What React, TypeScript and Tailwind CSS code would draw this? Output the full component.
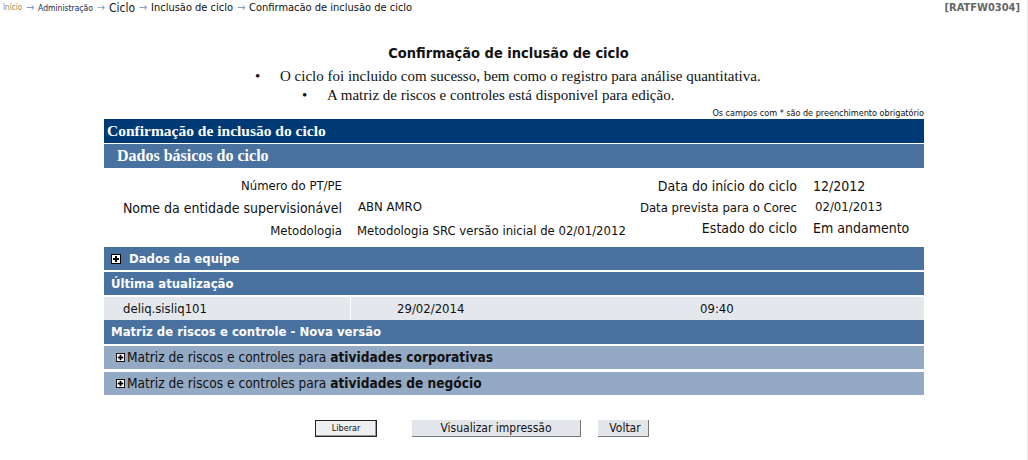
import React from "react";

const sans = "font-['DejaVu_Sans_Condensed','DejaVu_Sans',sans-serif]";
const serif = "font-['Liberation_Serif','Times_New_Roman',serif]";

const PlusBox = ({ size = 10 }: { size?: number }) => (
  <svg width={size} height={size} viewBox="0 0 10 10" className="shrink-0">
    <rect x="0.5" y="0.5" width="9" height="9" fill="#fff" stroke="#000" />
    <rect x="2" y="4" width="6" height="2" fill="#000" />
    <rect x="4" y="2" width="2" height="6" fill="#000" />
  </svg>
);

const Arrow = ({ dotted }: { dotted?: boolean }) => (
  <span className="w-[16px] text-center text-[11px] text-[#8a9ab8]">{dotted ? "⇢" : "→"}</span>
);

export default function App() {
  return (
    <div className={`w-[1028px] h-[460px] bg-white border-r border-[#e6e6e6] ${sans} text-[#111]`}>
      {/* breadcrumb */}
      <div className="flex items-center justify-between h-[16px] pl-[3px] pr-[7px]">
        <div className="flex items-center whitespace-nowrap">
          <span className="text-[8px] text-[#9a8a50]">Início</span>
          <Arrow />
          <span className="text-[8.5px] text-[#1a2a50]">Administração</span>
          <Arrow dotted />
          <span className="text-[12px]">Ciclo</span>
          <Arrow />
          <span className="text-[11px]">Inclusão de ciclo</span>
          <Arrow />
          <span className="text-[11px]">Confirmacão de inclusão de ciclo</span>
        </div>
        <span className="text-[11px] font-bold text-[#666]">[RATFW0304]</span>
      </div>

      {/* title */}
      <div className="mt-[28px] text-center text-[14.5px] font-bold leading-[18px] pr-[10px]">
        Confirmação de inclusão de ciclo
      </div>
      <div className={`${serif} text-[15px] leading-[19px] mt-[5px]`}>
        <div className="flex pl-[255px]">
          <span className="w-[25px]">•</span>
          <span>O ciclo foi incluido com sucesso, bem como o registro para análise quantitativa.</span>
        </div>
        <div className="flex pl-[302px]">
          <span className="w-[25px]">•</span>
          <span>A matriz de riscos e controles está disponivel para edição.</span>
        </div>
      </div>
      <div className="w-[820px] ml-[104px] text-right text-[9px] leading-[10px] mt-[3px]">
        Os campos com * são de preenchimento obrigatório
      </div>

      {/* main table */}
      <div className="w-[820px] ml-[104px] mt-[1px] flex flex-col">
        <div className={`h-[24px] bg-[#003a75] text-white ${serif} font-bold text-[15.5px] flex items-center pl-[3px]`}>
          Confirmação de inclusão do ciclo
        </div>
        <div className={`h-[24px] mt-[1px] bg-[#4a72a0] text-white ${serif} font-bold text-[16px] flex items-center pl-[13px]`}>
          Dados básicos do ciclo
        </div>

        <div className="grid grid-cols-[238px_268px_187px_1fr] grid-rows-[22px_22px_24px] mt-[7px] mb-[4px] text-[13px] items-center whitespace-nowrap">
          <div className="text-right">Número do PT/PE</div>
          <div className="pl-[15px]"></div>
          <div className="text-right text-[14px]">Data do início do ciclo</div>
          <div className="pl-[16px] text-[14px]">12/2012</div>

          <div className="text-right text-[14px]">Nome da entidade supervisionável</div>
          <div className="pl-[16px] -mt-[2px]">ABN AMRO</div>
          <div className="text-right">Data prevista para o Corec</div>
          <div className="pl-[18px] -mt-[2px]">02/01/2013</div>

          <div className="text-right">Metodologia</div>
          <div className="pl-[15px]">Metodologia SRC versão inicial de 02/01/2012</div>
          <div className="text-right text-[14px] -mt-[6px]">Estado do ciclo</div>
          <div className="pl-[16px] text-[14px] -mt-[6px]">Em andamento</div>
        </div>

        <div className="h-[23px] bg-[#4a72a0] text-white font-bold text-[13px] flex items-center pl-[7px] gap-[8px]">
          <PlusBox />
          Dados da equipe
        </div>
        <div className="h-[23px] mt-[2px] bg-[#4a72a0] text-white font-bold text-[13px] flex items-center pl-[7px]">
          Última atualização
        </div>
        <div className="h-[23px] mt-[2px] bg-[#e4e7ec] text-[13px] flex items-center">
          <div className="w-[247px] h-full flex items-center pl-[19px] border-r border-white">deliq.sisliq101</div>
          <div className="w-[300px] pl-[46px]">29/02/2014</div>
          <div className="pl-[49px]">09:40</div>
        </div>
        <div className="h-[24px] bg-[#4a72a0] text-white font-bold text-[13px] flex items-center pl-[7px]">
          Matriz de riscos e controle - Nova versão
        </div>
        <div className="h-[23px] mt-[2px] bg-[#93a9c4] text-[13.6px] flex items-center pl-[12px] gap-[2px]">
          <PlusBox size={9} />
          <span>
            Matriz de riscos e controles para <b>atividades corporativas</b>
          </span>
        </div>
        <div className="h-[23px] mt-[3px] bg-[#93a9c4] text-[13.6px] flex items-center pl-[12px] gap-[2px]">
          <PlusBox size={9} />
          <span>
            Matriz de riscos e controles para <b>atividades de negócio</b>
          </span>
        </div>
      </div>

      {/* buttons */}
      <div className="flex items-center mt-[25px] pl-[315px]">
        <button className="w-[62px] h-[17px] border border-[#222] bg-[#eeeff2] text-[9px] leading-none shadow-[inset_-1px_-1px_0_#999]">
          Liberar
        </button>
        <button className="ml-[35px] w-[169px] h-[17px] bg-[#e2e5ea] border-r border-b border-[#777] text-[12px] leading-none">
          Visualizar impressão
        </button>
        <button className="ml-[17px] w-[51px] h-[17px] bg-[#e2e5ea] border-r border-b border-[#777] text-[12px] leading-none pl-[4px]">
          Voltar
        </button>
      </div>
    </div>
  );
}
